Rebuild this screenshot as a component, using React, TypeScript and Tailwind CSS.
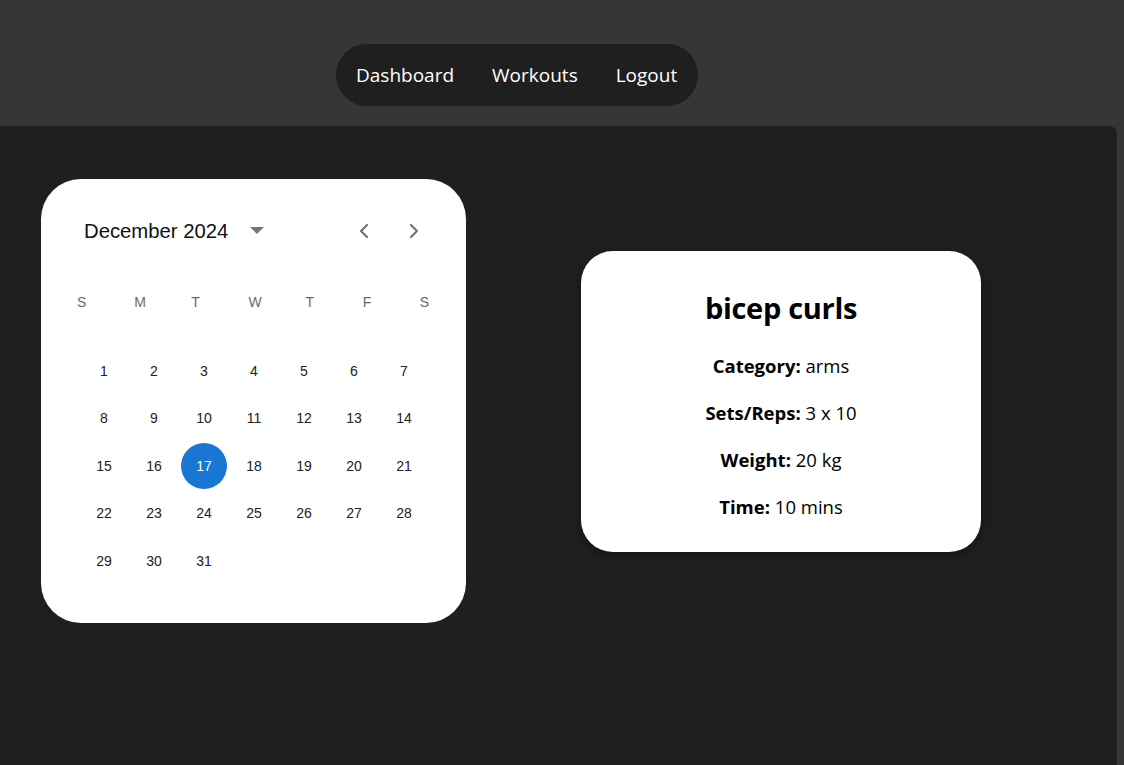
import { ChevronLeft, ChevronRight } from "lucide-react";

const weekdays = ["S", "M", "T", "W", "T", "F", "S"];

const weeks: (number | null)[][] = [
  [1, 2, 3, 4, 5, 6, 7],
  [8, 9, 10, 11, 12, 13, 14],
  [15, 16, 17, 18, 19, 20, 21],
  [22, 23, 24, 25, 26, 27, 28],
  [29, 30, 31, null, null, null, null],
];

function Calendar() {
  return (
    <div className="w-[425px] h-[444px] bg-white rounded-[40px] pt-[38px] font-['Liberation_Sans',Arial,sans-serif]">
      {/* Header */}
      <div className="flex items-center h-[28px] pl-[43px] pr-[40px]">
        <span className="text-[20.3px] text-[#111]">December 2024</span>
        <svg className="ml-[22px] w-[14px] h-[8px]" viewBox="0 0 14 8">
          <path d="M0 0 L14 0 L7 7 Z" fill="#757575" />
        </svg>
        <div className="ml-auto flex items-center gap-[26px] text-[#757575]">
          <ChevronLeft className="w-[24px] h-[24px]" strokeWidth={2.2} />
          <ChevronRight className="w-[24px] h-[24px]" strokeWidth={2.2} />
        </div>
      </div>

      {/* Weekdays */}
      <div className="flex mt-[47px] pl-[25px]">
        {weekdays.map((d, i) => (
          <div key={i} className="w-[57.4px] text-left pl-[11px] text-[14px] text-[#6b6b6b]">
            {d}
          </div>
        ))}
      </div>

      {/* Days */}
      <div className="mt-[35px] pl-[38px] flex flex-col gap-[1.5px]">
        {weeks.map((w, wi) => (
          <div key={wi} className="flex h-[46px]">
            {w.map((d, di) => (
              <div key={di} className="w-[50px] flex items-center justify-center">
                {d !== null &&
                  (d === 17 ? (
                    <div className="w-[46px] h-[46px] rounded-full bg-[#1976d2] text-white flex items-center justify-center text-[14px]">
                      {d}
                    </div>
                  ) : (
                    <span className="text-[14px] text-[#222]">{d}</span>
                  ))}
              </div>
            ))}
          </div>
        ))}
      </div>
    </div>
  );
}

function WorkoutCard() {
  const rows = [
    { label: "Category:", value: "arms" },
    { label: "Sets/Reps:", value: "3 x 10" },
    { label: "Weight:", value: "20 kg" },
    { label: "Time:", value: "10 mins" },
  ];
  return (
    <div className="w-[400px] h-[301px] bg-white rounded-[32px] shadow-[0_4px_12px_rgba(0,0,0,0.35)] flex flex-col items-center pt-[37px] text-black font-['Open_Sans','Noto_Sans',sans-serif]">
      <h2 className="text-[29px] font-bold leading-[40px] tracking-[-0.3px]">bicep curls</h2>
      <div className="mt-[24px] flex flex-col items-center gap-[19px]">
        {rows.map((r) => (
          <p key={r.label} className="text-[18.5px] leading-[28px]">
            <span className="font-bold">{r.label}</span> {r.value}
          </p>
        ))}
      </div>
    </div>
  );
}

export default function App() {
  return (
    <div className="min-h-screen bg-[#363636] flex flex-col overflow-hidden">
      {/* Top nav */}
      <header className="h-[126px] pt-[44px] pl-[336px]">
        <nav className="inline-flex items-center h-[62px] w-[362px] pl-[20px] pr-[18px] gap-[38px] rounded-full bg-[#1f1f1f] text-white text-[19px] font-['Open_Sans','Noto_Sans',sans-serif]">
          <span>Dashboard</span>
          <span>Workouts</span>
          <span>Logout</span>
        </nav>
      </header>

      {/* Main panel */}
      <main className="w-[1117px] h-[639px] bg-[#1f1f1f] rounded-tr-lg">
        <div className="flex items-center pl-[41px] pt-[53px] gap-[115px]">
          <Calendar />
          <WorkoutCard />
        </div>
      </main>
    </div>
  );
}
